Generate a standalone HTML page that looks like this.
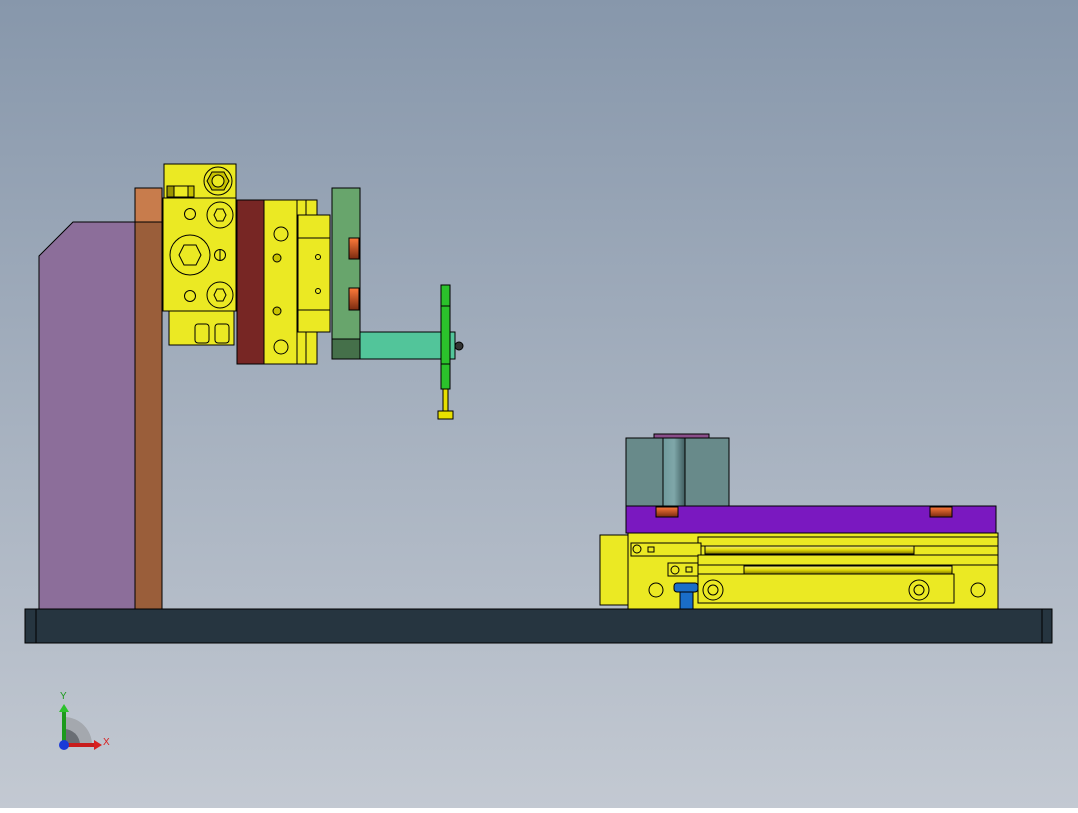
<!DOCTYPE html>
<html><head><style>html,body{margin:0;padding:0}body{width:1078px;height:808px;overflow:hidden}</style></head><body>
<svg width="1078" height="808" viewBox="0 0 1078 808" xmlns="http://www.w3.org/2000/svg" stroke="#000" stroke-width="1">
<defs>
<linearGradient id="bg" x1="0" y1="0" x2="0" y2="1"><stop offset="0" stop-color="#8797ab"/><stop offset="1" stop-color="#c3c9d2"/></linearGradient>
<linearGradient id="cyl" x1="0" y1="0" x2="1" y2="0"><stop offset="0" stop-color="#6f9a9c"/><stop offset="0.5" stop-color="#7fa7a9"/><stop offset="1" stop-color="#3f5e60"/></linearGradient>
<linearGradient id="rod" x1="0" y1="0" x2="0" y2="1"><stop offset="0" stop-color="#f5f07a"/><stop offset="0.5" stop-color="#e0d800"/><stop offset="1" stop-color="#7a7200"/></linearGradient>
<linearGradient id="nut" x1="0" y1="0" x2="0" y2="1"><stop offset="0" stop-color="#ff7a3a"/><stop offset="1" stop-color="#7a2a10"/></linearGradient>
</defs>
<rect width="1078" height="808" fill="url(#bg)" stroke="none"/>
<rect x="25" y="609" width="1027" height="34" fill="#263540"/>
<line x1="36" y1="609" x2="36" y2="643"/><line x1="1042" y1="609" x2="1042" y2="643"/>
<polygon points="73,222 135,222 135,609 39,609 39,256" fill="#8c6e9a"/>
<rect x="135" y="188" width="27" height="34" fill="#c87c4c"/>
<rect x="135" y="222" width="27" height="387" fill="#9a5e3a"/>
<rect x="164" y="164" width="72" height="34" fill="#ebe923"/>
<rect x="167" y="186" width="27" height="11" fill="#ebe923"/><rect x="167" y="186" width="7" height="11" fill="#9a9400"/><rect x="188" y="186" width="6" height="11" fill="#c8c200"/>
<circle cx="218" cy="181" r="14" fill="none"/><polygon points="212,172 224,172 229,181 224,190 212,190 207,181" fill="#c8c200"/><circle cx="218" cy="181" r="6" fill="#ebe923"/>
<rect x="163" y="198" width="73" height="113" fill="#ebe923"/>
<circle cx="190" cy="214" r="5.5" fill="none"/><circle cx="220" cy="215" r="13" fill="none"/><polygon points="214,215 217,209 223,209 226,215 223,221 217,221" fill="none"/>
<circle cx="190" cy="255" r="20" fill="none"/><polygon points="179,255 184,245 196,245 201,255 196,265 184,265" fill="none"/>
<circle cx="220" cy="255" r="5.5" fill="none"/><line x1="220" y1="249" x2="220" y2="261"/>
<circle cx="190" cy="296" r="5.5" fill="none"/><circle cx="220" cy="295" r="13" fill="none"/><polygon points="214,295 217,289 223,289 226,295 223,301 217,301" fill="none"/>
<rect x="169" y="311" width="65" height="34" fill="#ebe923"/>
<rect x="195" y="324" width="14" height="19" rx="3" fill="#ebe923"/><rect x="215" y="324" width="14" height="19" rx="3" fill="#ebe923"/>
<rect x="237" y="200" width="27" height="164" fill="#772624"/>
<rect x="264" y="200" width="53" height="164" fill="#ebe923"/>
<line x1="297" y1="200" x2="297" y2="364"/><line x1="306" y1="200" x2="306" y2="364"/>
<circle cx="281" cy="234" r="7" fill="none"/><circle cx="277" cy="258" r="4" fill="#c8c200"/><circle cx="277" cy="311" r="4" fill="#c8c200"/><circle cx="281" cy="347" r="7" fill="none"/>
<rect x="298" y="215" width="32" height="117" fill="#ebe923"/>
<line x1="298" y1="238" x2="330" y2="238"/><line x1="298" y1="310" x2="330" y2="310"/>
<circle cx="318" cy="257" r="2.5" fill="none"/><circle cx="318" cy="291" r="2.5" fill="none"/>
<rect x="332" y="188" width="28" height="171" fill="#68a56c"/>
<rect x="332" y="339" width="28" height="20" fill="#45704a"/>
<rect x="349" y="238" width="10" height="21" fill="url(#nut)"/><rect x="349" y="288" width="10" height="22" fill="url(#nut)"/>
<rect x="360" y="332" width="95" height="27" fill="#52c59a"/>
<line x1="445" y1="332" x2="445" y2="359"/>
<circle cx="459" cy="346" r="4" fill="#333"/>
<rect x="441" y="285" width="9" height="104" fill="#2bc22b"/>
<line x1="441" y1="306" x2="450" y2="306"/><line x1="441" y1="364" x2="450" y2="364"/>
<rect x="443" y="389" width="5" height="22" fill="#e8e000"/>
<rect x="438" y="411" width="15" height="8" fill="#e8e000"/>
<rect x="654" y="434" width="55" height="5" fill="#8a4e8a"/>
<rect x="626" y="438" width="103" height="68" fill="#688a8a"/>
<rect x="663" y="438" width="22" height="68" fill="url(#cyl)"/>
<rect x="626" y="506" width="370" height="27" fill="#7a18c0"/>
<rect x="656" y="507" width="22" height="10" fill="url(#nut)"/><rect x="930" y="507" width="22" height="10" fill="url(#nut)"/>
<rect x="600" y="535" width="28" height="70" fill="#ebe923"/>
<rect x="628" y="533" width="370" height="76" fill="#ebe923"/>
<rect x="698" y="537" width="300" height="9" fill="#ebe923"/>
<rect x="705" y="546" width="209" height="8" fill="url(#rod)"/>
<rect x="631" y="543" width="70" height="13" fill="#ebe923"/><circle cx="637" cy="549" r="4" fill="none"/><rect x="648" y="547" width="6" height="5" fill="none"/>
<rect x="698" y="555" width="300" height="10" fill="#ebe923"/>
<rect x="668" y="563" width="30" height="13" fill="#ebe923"/><circle cx="675" cy="570" r="4" fill="none"/><rect x="686" y="567" width="6" height="5" fill="none"/>
<rect x="744" y="566" width="208" height="8" fill="url(#rod)"/>
<rect x="698" y="574" width="256" height="29" fill="#ebe923"/>
<circle cx="656" cy="590" r="7" fill="none"/><circle cx="713" cy="590" r="10" fill="none"/><circle cx="713" cy="590" r="5" fill="none"/>
<circle cx="919" cy="590" r="10" fill="none"/><circle cx="919" cy="590" r="5" fill="none"/><circle cx="978" cy="590" r="7" fill="none"/>
<rect x="674" y="583" width="24" height="9" rx="3" fill="#1a6ec8"/><rect x="680" y="592" width="13" height="17" fill="#1a6ec8"/>
<!-- triad -->
<path d="M64,745 L64,717 A28,28 0 0 1 92,745 Z" fill="#a4a8ae" stroke="none"/>
<path d="M64,745 L64,729 A16,16 0 0 1 80,745 Z" fill="#6a6e74" stroke="none"/>
<line x1="64" y1="744" x2="64" y2="710" stroke="#1c9a1c" stroke-width="4"/><polygon points="59,712 69,712 64,704" fill="#2cc22c" stroke="none"/>
<line x1="64" y1="745" x2="96" y2="745" stroke="#c81c1c" stroke-width="4"/><polygon points="94,740 94,750 102,745" fill="#d82020" stroke="none"/>
<circle cx="64" cy="745" r="5" fill="#1a3ad8" stroke="none"/>
<text x="60" y="699" font-family="Liberation Sans, sans-serif" font-size="10" fill="#1c9a1c" stroke="none">Y</text>
<text x="103" y="745" font-family="Liberation Sans, sans-serif" font-size="10" fill="#d82020" stroke="none">X</text>
</svg>
</body></html>
